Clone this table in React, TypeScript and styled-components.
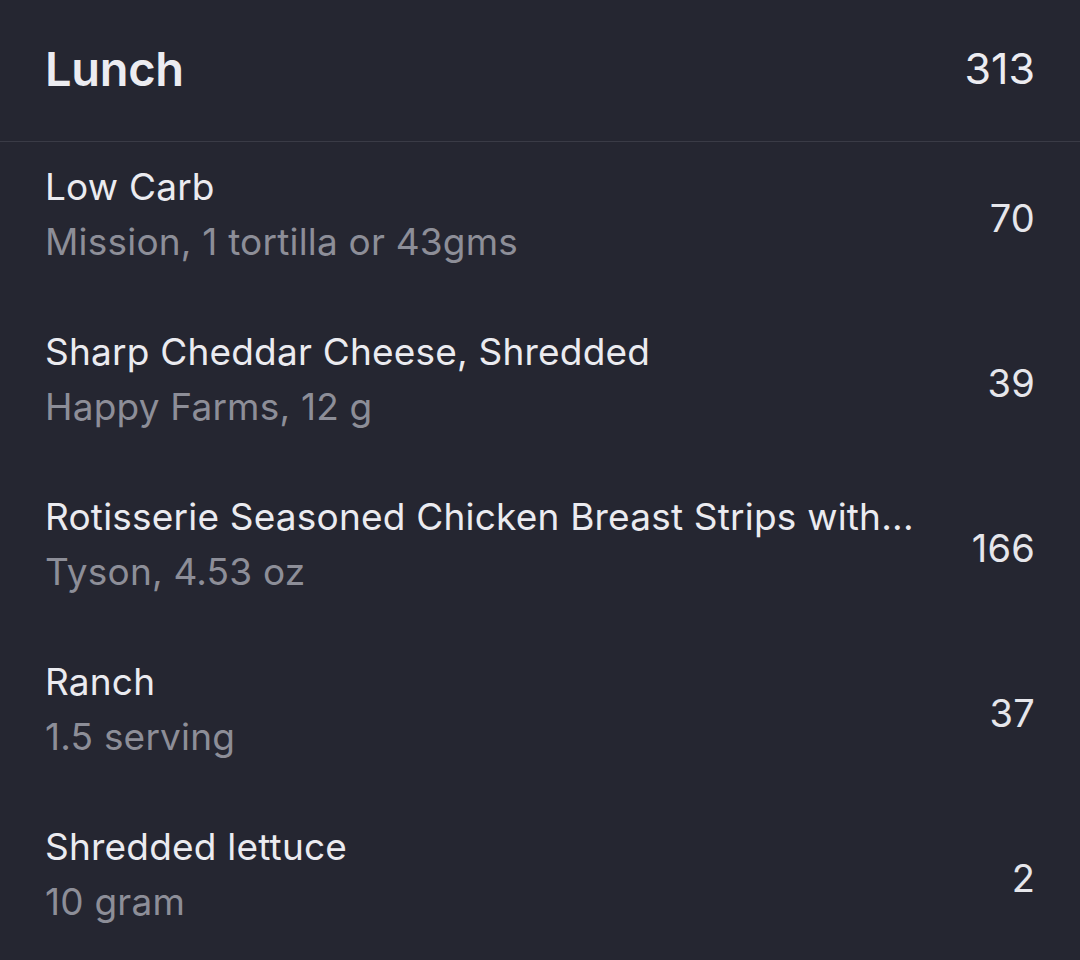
import { JSX } from 'react';
import styled, { createGlobalStyle } from 'styled-components';

const GlobalStyle = createGlobalStyle`
  html, body {
    margin: 0;
    padding: 0;
    background: #252631;
  }
  body {
    font-family: Inter, 'Noto Sans', sans-serif;
    -webkit-font-smoothing: antialiased;
  }
`;

const Panel = styled.div`
  width: 1080px;
  min-height: 960px;
  background: #252631;
  overflow: hidden;
`;

const Header = styled.div`
  height: 142px;
  display: flex;
  align-items: center;
  justify-content: space-between;
  padding: 0 45px 5px 45px;
  box-sizing: border-box;
  border-bottom: 1px solid #3a3b46;
`;

const MealTitle = styled.h1`
  margin: 0;
  font-size: 47px;
  font-weight: 600;
  letter-spacing: -0.3px;
  color: #ececf1;
`;

const MealTotal = styled.span`
  font-size: 43px;
  font-weight: 400;
  color: #ececf1;
`;

const FoodList = styled.ul`
  list-style: none;
  margin: 0;
  padding: 0;
`;

const FoodRow = styled.li`
  height: 165px;
  box-sizing: border-box;
  display: flex;
  align-items: center;
  gap: 40px;
  padding: 16px 45px 38px 45px;
`;

const FoodText = styled.div`
  flex: 1;
  min-width: 0;
  display: flex;
  flex-direction: column;
`;

const FoodName = styled.div`
  font-size: 37px;
  line-height: 55px;
  letter-spacing: 0.2px;
  color: #ebebf0;
  white-space: nowrap;
  overflow: hidden;
  text-overflow: ellipsis;
`;

const FoodDetail = styled.div`
  font-size: 37px;
  line-height: 55px;
  letter-spacing: 0.2px;
  color: #8d8e98;
  white-space: nowrap;
`;

const Calories = styled.span`
  margin-top: 8px;
  font-size: 38px;
  letter-spacing: 0.2px;
  color: #e6e6eb;
`;

type Food = { name: string; detail: string; kcal: number };

const foods: Food[] = [
  { name: 'Low Carb', detail: 'Mission, 1 tortilla or 43gms', kcal: 70 },
  { name: 'Sharp Cheddar Cheese, Shredded', detail: 'Happy Farms, 12 g', kcal: 39 },
  { name: 'Rotisserie Seasoned Chicken Breast Strips with...', detail: 'Tyson, 4.53 oz', kcal: 166 },
  { name: 'Ranch', detail: '1.5 serving', kcal: 37 },
  { name: 'Shredded lettuce', detail: '10 gram', kcal: 2 },
];

const App = (): JSX.Element => {
  return (
    <Panel>
      <GlobalStyle />
      <Header>
        <MealTitle>Lunch</MealTitle>
        <MealTotal>313</MealTotal>
      </Header>
      <FoodList>
        {foods.map((f) => (
          <FoodRow key={f.name}>
            <FoodText>
              <FoodName>{f.name}</FoodName>
              <FoodDetail>{f.detail}</FoodDetail>
            </FoodText>
            <Calories>{f.kcal}</Calories>
          </FoodRow>
        ))}
      </FoodList>
    </Panel>
  );
};

export default App;
